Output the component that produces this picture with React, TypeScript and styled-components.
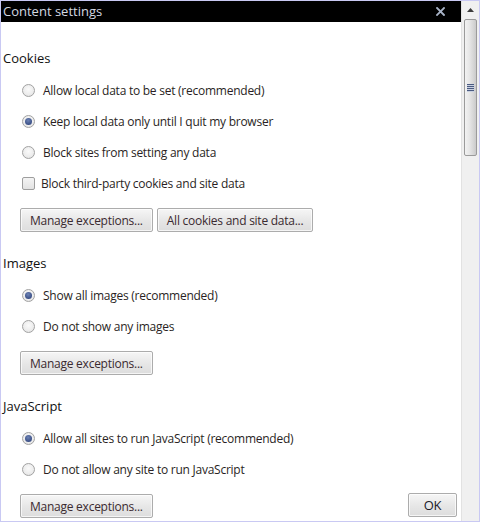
import React, { useState } from 'react';
import styled, { createGlobalStyle } from 'styled-components';

const GlobalStyle = createGlobalStyle`
  html, body {
    margin: 0;
    padding: 0;
    background: #ffffff;
  }
  body {
    font-family: "Open Sans", "Noto Sans", "DejaVu Sans", sans-serif;
  }
`;

type Option = { id: string; label: string };

const sections = [
  {
    title: 'Cookies',
    name: 'cookies',
    options: [
      { id: 'allow', label: 'Allow local data to be set (recommended)' },
      { id: 'session', label: 'Keep local data only until I quit my browser' },
      { id: 'block', label: 'Block sites from setting any data' },
    ],
    initial: 'session',
    checkbox: 'Block third-party cookies and site data',
    buttons: ['Manage exceptions...', 'All cookies and site data...'],
  },
  {
    title: 'Images',
    name: 'images',
    options: [
      { id: 'allow', label: 'Show all images (recommended)' },
      { id: 'block', label: 'Do not show any images' },
    ],
    initial: 'allow',
    buttons: ['Manage exceptions...'],
  },
  {
    title: 'JavaScript',
    name: 'javascript',
    options: [
      { id: 'allow', label: 'Allow all sites to run JavaScript (recommended)' },
      { id: 'block', label: 'Do not allow any site to run JavaScript' },
    ],
    initial: 'allow',
    buttons: ['Manage exceptions...'],
  },
];

const Section: React.FC<{
  title: string;
  name: string;
  options: Option[];
  initial: string;
  checkbox?: string;
  buttons: string[];
}> = ({ title, options, initial, checkbox, buttons }) => {
  const [value, setValue] = useState(initial);
  const [checked, setChecked] = useState(false);

  return (
    <SectionBox>
      <Heading>{title}</Heading>
      {options.map(o => (
        <Row key={o.id} onClick={() => setValue(o.id)}>
          <Radio $checked={value === o.id} />
          <Label>{o.label}</Label>
        </Row>
      ))}
      {checkbox && (
        <Row onClick={() => setChecked(!checked)}>
          <Check $checked={checked} />
          <Label>{checkbox}</Label>
        </Row>
      )}
      <ButtonRow>
        {buttons.map(b => (
          <Button key={b}>{b}</Button>
        ))}
      </ButtonRow>
    </SectionBox>
  );
};

const App: React.FC = () => (
  <>
    <GlobalStyle />
    <Frame>
      <Main>
        <TitleBar>
          <Title>Content settings</Title>
          <Close>
            <svg width="9" height="9" viewBox="0 0 9 9">
              <path d="M1 1 L8 8 M8 1 L1 8" stroke="#a9b4c8" strokeWidth="1.8" strokeLinecap="square" />
            </svg>
          </Close>
        </TitleBar>
        <Content>
          {sections.map(s => (
            <Section key={s.name} {...s} />
          ))}
        </Content>
        <Footer>
          <OkButton>OK</OkButton>
        </Footer>
      </Main>
      <ScrollBar>
        <ArrowButton>
          <svg width="7" height="4" viewBox="0 0 7 4">
            <path d="M0 4 L3.5 0 L7 4 Z" fill="#3c3c3c" />
          </svg>
        </ArrowButton>
        <Thumb>
          <Grip>
            <span />
            <span />
            <span />
            <span />
          </Grip>
        </Thumb>
      </ScrollBar>
    </Frame>
  </>
);

export default App;

const Frame = styled.div`
  width: 480px;
  height: 522px;
  box-sizing: border-box;
  border: 1px solid #c9c9f3;
  display: flex;
  overflow: hidden;
  background: #ffffff;
`;

const Main = styled.div`
  flex: 1 0;
  position: relative;
  display: flex;
  flex-direction: column;
  overflow: hidden;
`;

const TitleBar = styled.div`
  height: 21px;
  background: #000000;
  display: flex;
  align-items: center;
  justify-content: space-between;
  padding: 0 0 0 2px;
`;

const Title = styled.div`
  font-family: "Open Sans", "Noto Sans", sans-serif;
  font-size: 13px;
  color: #d4d8e0;
  line-height: 21px;
`;

const Close = styled.div`
  width: 20px;
  height: 21px;
  margin-right: 11px;
  display: flex;
  align-items: center;
  justify-content: center;
`;

const Content = styled.div`
  flex: 1 0;
  padding: 27px 0 0 2px;
`;

const SectionBox = styled.div`
  display: flex;
  flex-direction: column;
  margin-bottom: 22px;
`;

const Heading = styled.div`
  font-size: 13px;
  color: #111111;
  height: 18px;
  line-height: 18px;
  margin-bottom: 8px;
`;

const Row = styled.div`
  display: flex;
  align-items: center;
  height: 31px;
  padding-left: 19px;
  cursor: default;
`;

const Radio = styled.div<{ $checked?: boolean }>`
  width: 11px;
  height: 11px;
  border-radius: 50%;
  border: 1px solid #a2a2a2;
  background: radial-gradient(circle at 50% 40%, #fafafa 0%, #ececec 60%, #dcdcdc 100%);
  display: flex;
  align-items: center;
  justify-content: center;
  margin-right: 8px;
  flex-shrink: 0;

  &::after {
    content: '';
    display: ${p => (p.$checked ? 'block' : 'none')};
    width: 7px;
    height: 7px;
    border-radius: 50%;
    background: radial-gradient(circle at 45% 35%, #6c82b4 0%, #3a4f86 70%, #2e3f70 100%);
  }
`;

const Check = styled.div<{ $checked?: boolean }>`
  width: 11px;
  height: 11px;
  border: 1px solid #9e9e9e;
  border-radius: 2px;
  background: linear-gradient(#f4f4f4, #e2e2e2);
  margin-right: 6px;
  flex-shrink: 0;
  position: relative;

  &::after {
    content: '';
    display: ${p => (p.$checked ? 'block' : 'none')};
    position: absolute;
    left: 3px;
    top: 0px;
    width: 3px;
    height: 7px;
    border: solid #333;
    border-width: 0 2px 2px 0;
    transform: rotate(45deg);
  }
`;

const Label = styled.span`
  font-size: 12px;
  color: #2a1f24;
  letter-spacing: -0.25px;
  white-space: nowrap;
`;

const ButtonRow = styled.div`
  display: flex;
  gap: 4px;
  padding-left: 17px;
  margin-top: 9px;
`;

const Button = styled.button`
  height: 24px;
  padding: 0 9px;
  font-family: "Open Sans", "Noto Sans", sans-serif;
  font-size: 12px;
  letter-spacing: -0.25px;
  color: #3a2a30;
  background: linear-gradient(#f6f6f6, #e6e6e6 55%, #dddddd);
  border: 1px solid #acacac;
  border-radius: 2px;
  box-shadow: inset 0 0 0 1px rgba(255, 255, 255, 0.7);
  cursor: default;
`;

const Footer = styled.div`
  position: absolute;
  right: 4px;
  bottom: 4px;
`;

const OkButton = styled(Button)`
  width: 49px;
  font-size: 13px;
  color: #1a1a2a;
`;

const ScrollBar = styled.div`
  width: 17px;
  background: #f0f0f0;
  border-left: 1px solid #e2e2e2;
  display: flex;
  flex-direction: column;
  align-items: center;
`;

const ArrowButton = styled.div`
  height: 17px;
  width: 17px;
  display: flex;
  align-items: center;
  justify-content: center;
`;

const Thumb = styled.div`
  width: 13px;
  height: 137px;
  margin-top: 1px;
  box-sizing: border-box;
  border: 1px solid #9a9a9a;
  border-radius: 2px;
  background: linear-gradient(90deg, #f2f2f2, #e6e6e6 40%, #d4d4d4 80%, #cacaca);
  display: flex;
  align-items: center;
  justify-content: center;
`;

const Grip = styled.div`
  display: flex;
  flex-direction: column;
  gap: 1px;
  & > span {
    display: block;
    width: 7px;
    height: 1px;
    background: #4a5a80;
    box-shadow: 0 1px 0 #c8d0e0;
  }
`;
